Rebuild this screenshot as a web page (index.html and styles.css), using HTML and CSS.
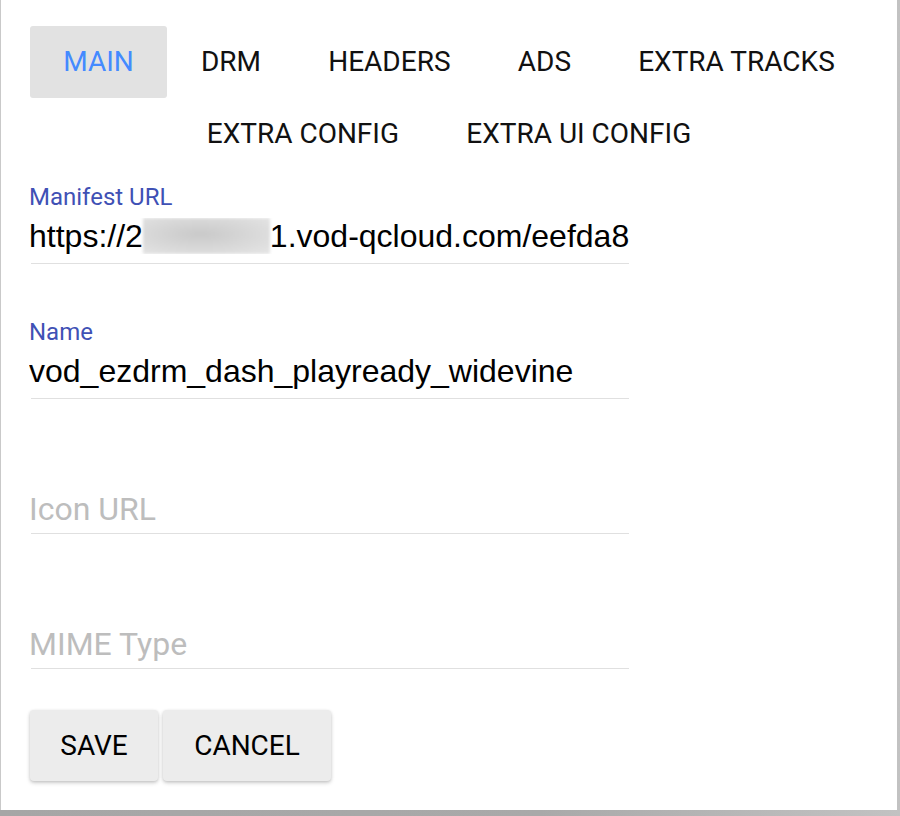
FILE: index.html
```html
<!DOCTYPE html>
<html lang="en">
<head>
<meta charset="utf-8">
<title>Edit asset</title>
<link rel="stylesheet" href="styles.css">
</head>
<body>
  <div class="dialog">
    <nav class="tabs">
      <div class="tab tab-active">MAIN</div>
      <div class="tab">DRM</div>
      <div class="tab">HEADERS</div>
      <div class="tab">ADS</div>
      <div class="tab">EXTRA TRACKS</div>
      <div class="tab">EXTRA CONFIG</div>
      <div class="tab">EXTRA UI CONFIG</div>
    </nav>

    <form class="form">
      <div class="field">
        <div class="label">Manifest URL</div>
        <div class="value">https://2<span class="redacted"></span>1.vod-qcloud.com/eefda8c3e2a1/manifest.mpd</div>
        <div class="underline"></div>
      </div>
      <div class="field">
        <div class="label">Name</div>
        <div class="value">vod_ezdrm_dash_playready_widevine</div>
        <div class="underline"></div>
      </div>
      <div class="field">
        <div class="label"></div>
        <div class="value placeholder">Icon URL</div>
        <div class="underline"></div>
      </div>
      <div class="field">
        <div class="label"></div>
        <div class="value placeholder">MIME Type</div>
        <div class="underline"></div>
      </div>

      <div class="actions">
        <button type="button" class="btn btn-save">SAVE</button>
        <button type="button" class="btn btn-cancel">CANCEL</button>
      </div>
    </form>
  </div>
</body>
</html>
```
FILE: styles.css
```css
html, body {
  margin: 0;
  padding: 0;
}

body {
  width: 900px;
  height: 816px;
  overflow: hidden;
  background: linear-gradient(90deg, #a6a6a6 0%, #a9a9a9 60%, #c2c2c2 100%);
  font-family: Roboto, "Noto Sans", Arial, sans-serif;
}

.dialog {
  box-sizing: border-box;
  width: 897px;
  height: 810px;
  background: #ffffff;
  border-left: 1px solid #c9c9c9;
  padding-top: 26px;
}

/* tab strip */
.tabs {
  display: flex;
  flex-wrap: wrap;
  justify-content: center;
}

.tab {
  height: 72px;
  line-height: 72px;
  padding: 0 33.6px;
  font-size: 28px;
  font-weight: 400;
  color: #111111;
  border-radius: 3px;
  white-space: nowrap;
}

.tab-active {
  background: #e2e2e2;
  color: #448aff;
}

/* text fields */
.form {
  padding: 15px 0 0 30px;
}

.field {
  width: 598px;
  margin-bottom: 56px;
}

.label {
  height: 24px;
  line-height: 24px;
  margin-left: -2px;
  font-size: 24px;
  color: #3f51b5;
}

.value {
  margin-top: 9px;
  margin-left: -2px;
  padding-right: 2px;
  height: 36px;
  line-height: 36px;
  font-family: "Liberation Sans", Arial, sans-serif;
  font-size: 32px;
  color: #000000;
  white-space: nowrap;
  overflow: hidden;
}

.value.placeholder {
  font-family: Roboto, "Noto Sans", Arial, sans-serif;
  color: #bdbdbd;
  padding-top: 3px;
  height: 33px;
  line-height: 36px;
  overflow: visible;
}

.redacted {
  display: inline-block;
  width: 127px;
  height: 36px;
  vertical-align: top;
  background: radial-gradient(ellipse at 45% 45%, #c9c9c9 0%, #d6d6d6 45%, #e6e6e6 100%);
  filter: blur(1.5px);
}

.underline {
  margin-top: 9px;
  height: 1px;
  background: #e0e0e0;
}

/* buttons */
.actions {
  display: flex;
  gap: 5px;
  margin-top: -15px;
  margin-left: -1px;
}

.btn {
  height: 71px;
  padding: 0;
  border: none;
  border-radius: 4px;
  background: #ececec;
  color: #000000;
  font-family: Roboto, "Noto Sans", Arial, sans-serif;
  font-size: 28px;
  box-shadow: 0 2px 4px rgba(0, 0, 0, 0.16), 0 1px 3px rgba(0, 0, 0, 0.12);
}

.btn-save {
  width: 128px;
}

.btn-cancel {
  width: 168px;
}
```
